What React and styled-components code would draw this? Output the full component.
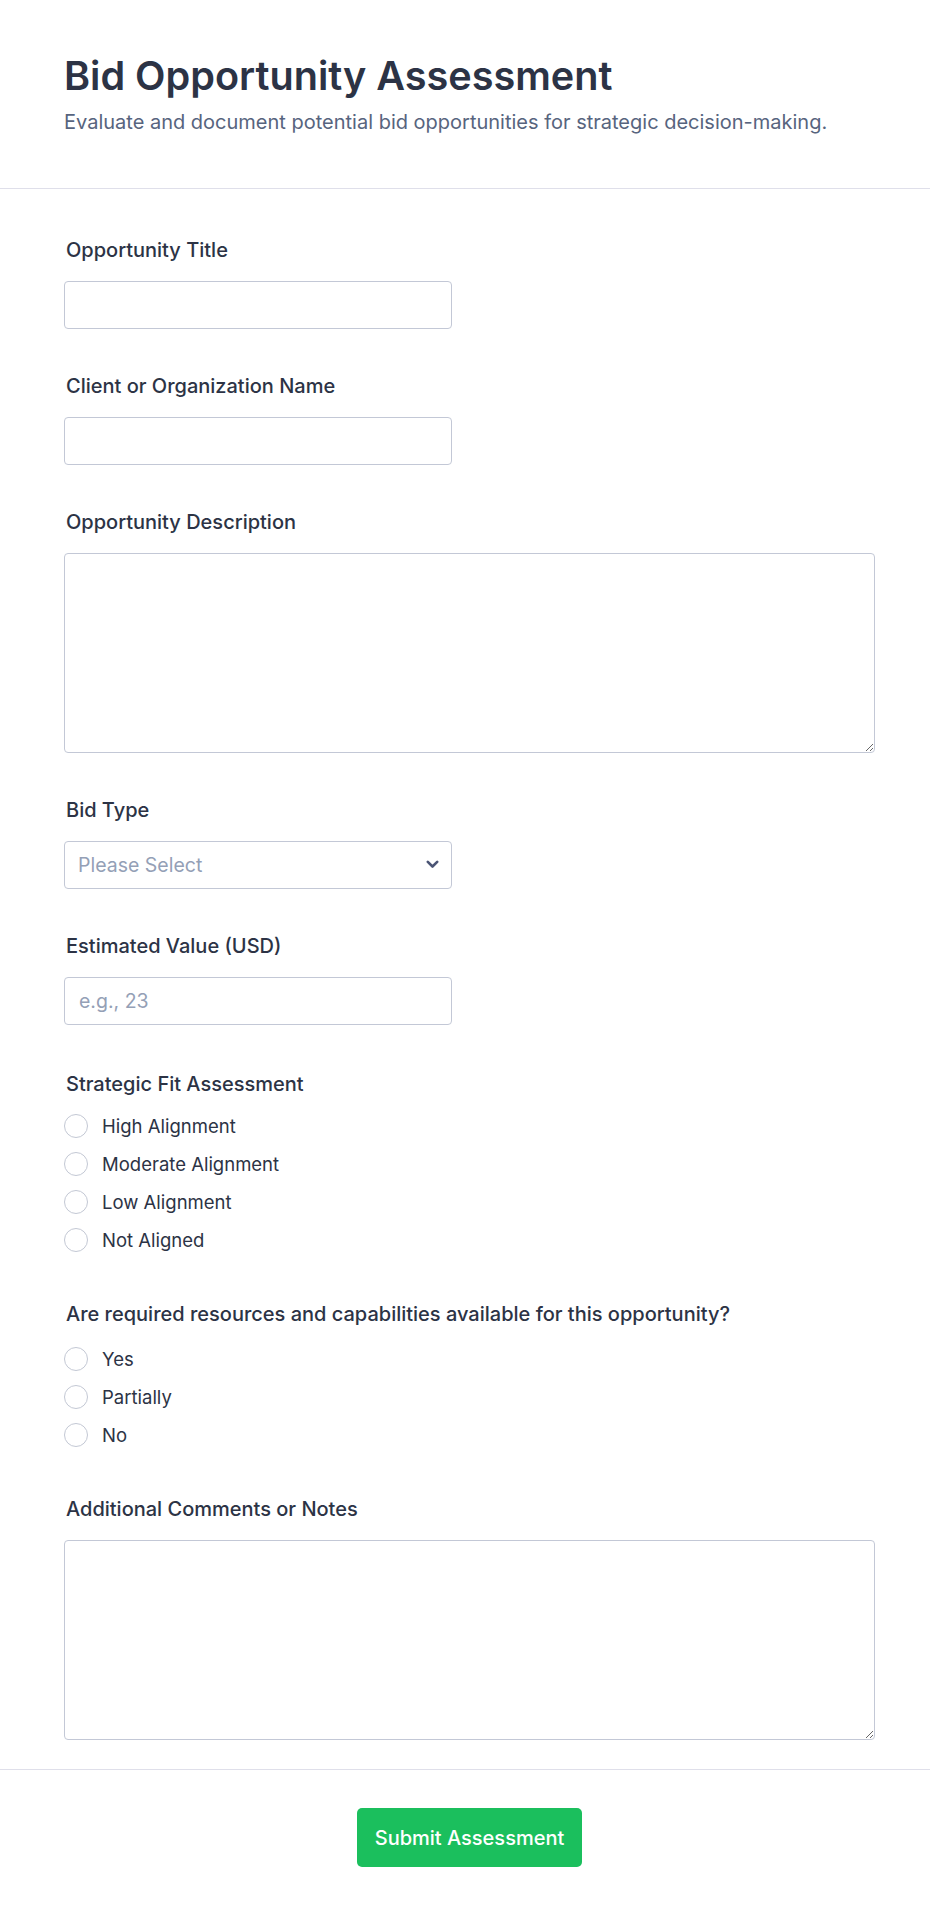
import React from "react";
import styled, { createGlobalStyle } from "styled-components";

const GlobalStyle = createGlobalStyle`
  * { box-sizing: border-box; }
  body {
    margin: 0;
    background: #fff;
    font-family: Inter, "Noto Sans", sans-serif;
    color: #2c3345;
  }
`;

const Page = styled.div`
  width: 930px;
  min-height: 1918px;
  background: #fff;
`;

const Header = styled.header`
  padding: 52px 64px 51px;
  border-bottom: 1px solid #dfdfea;
`;

const Title = styled.h1`
  margin: 0;
  font-size: 39.6px;
  line-height: 48px;
  font-weight: 600;
  color: #2c3345;
`;

const Subtitle = styled.p`
  margin: 7px 0 0;
  font-size: 20px;
  line-height: 30px;
  color: #57647e;
`;

const Form = styled.form`
  display: flex;
  flex-direction: column;
  gap: 43px;
  padding: 47px 55px 29px 64px;
`;

const Field = styled.div`
  display: flex;
  flex-direction: column;
  gap: 17px;
`;

const RadioField = styled.div`
  display: flex;
  flex-direction: column;
  gap: ${(p) => p.$gap}px;
  padding: 2px 0 ${(p) => p.$bottom}px;
`;

const Label = styled.label`
  display: block;
  font-size: 20px;
  line-height: 28px;
  font-weight: 500;
  color: #2c3345;
  padding-left: 2px;
`;

const TextInput = styled.input`
  width: 388px;
  height: 48px;
  border: 1px solid #c3c8d6;
  border-radius: 4px;
  padding: 0 14px;
  font: inherit;
  font-size: 19.5px;
  color: #2c3345;
  background: #fff;
  outline: none;
  &::placeholder {
    color: #94a0b6;
  }
`;

const TextArea = styled.textarea`
  width: 811px;
  height: 200px;
  border: 1px solid #c3c8d6;
  border-radius: 4px;
  padding: 12px 14px;
  font: inherit;
  font-size: 19px;
  color: #2c3345;
  background: #fff;
  outline: none;
  resize: vertical;
  display: block;
`;

const SelectWrap = styled.div`
  position: relative;
  width: 388px;
`;

const Select = styled.select`
  width: 100%;
  height: 48px;
  border: 1px solid #c3c8d6;
  border-radius: 4px;
  padding: 0 40px 0 13px;
  font: inherit;
  font-size: 19.5px;
  color: #94a0b6;
  background: #fff;
  appearance: none;
  outline: none;
`;

const Chevron = styled.svg`
  position: absolute;
  right: 13px;
  top: 19px;
  pointer-events: none;
`;

const RadioList = styled.div`
  display: flex;
  flex-direction: column;
  gap: 14px;
`;

const RadioRow = styled.label`
  display: flex;
  align-items: center;
  gap: 14px;
  height: 24px;
  font-size: 18.5px;
  color: #2c3345;
`;

const Circle = styled.span`
  width: 24px;
  height: 24px;
  border-radius: 50%;
  border: 1.5px solid #c3c8d4;
  background: #fff;
  flex: none;
`;

const Footer = styled.div`
  border-top: 1px solid #dfdfea;
  padding: 38px 55px 49px 64px;
  display: flex;
  justify-content: center;
`;

const SubmitButton = styled.button`
  height: 59px;
  padding: 0 18px;
  border: none;
  border-radius: 5px;
  background: #1bbf5d;
  color: #fff;
  font-family: inherit;
  font-size: 20px;
  font-weight: 500;
  cursor: pointer;
`;

function Radios({ options }) {
  return (
    <RadioList>
      {options.map((o) => (
        <RadioRow key={o}>
          <Circle />
          {o}
        </RadioRow>
      ))}
    </RadioList>
  );
}

export default function App() {
  return (
    <Page>
      <GlobalStyle />
      <Header>
        <Title>Bid Opportunity Assessment</Title>
        <Subtitle>Evaluate and document potential bid opportunities for strategic decision-making.</Subtitle>
      </Header>

      <Form onSubmit={(e) => e.preventDefault()}>
        <Field>
          <Label>Opportunity Title</Label>
          <TextInput type="text" />
        </Field>
        <Field>
          <Label>Client or Organization Name</Label>
          <TextInput type="text" />
        </Field>
        <Field>
          <Label>Opportunity Description</Label>
          <TextArea />
        </Field>
        <Field>
          <Label>Bid Type</Label>
          <SelectWrap>
            <Select defaultValue="">
              <option value="" disabled>Please Select</option>
              <option>Public Tender</option>
              <option>Private RFP</option>
              <option>Negotiated Contract</option>
            </Select>
            <Chevron width="13" height="9" viewBox="0 0 13 9">
              <path d="M1.8 1.8 L6.5 6.5 L11.2 1.8" fill="none" stroke="#4b5575" strokeWidth="2.6" strokeLinecap="round" strokeLinejoin="round" />
            </Chevron>
          </SelectWrap>
        </Field>
        <Field>
          <Label>Estimated Value (USD)</Label>
          <TextInput type="text" placeholder="e.g., 23" />
        </Field>
        <RadioField $gap={16} $bottom={3}>
          <Label>Strategic Fit Assessment</Label>
          <Radios options={["High Alignment", "Moderate Alignment", "Low Alignment", "Not Aligned"]} />
        </RadioField>
        <RadioField $gap={19} $bottom={5}>
          <Label>Are required resources and capabilities available for this opportunity?</Label>
          <Radios options={["Yes", "Partially", "No"]} />
        </RadioField>
        <Field>
          <Label>Additional Comments or Notes</Label>
          <TextArea />
        </Field>
      </Form>

      <Footer>
        <SubmitButton type="submit">Submit Assessment</SubmitButton>
      </Footer>
    </Page>
  );
}
